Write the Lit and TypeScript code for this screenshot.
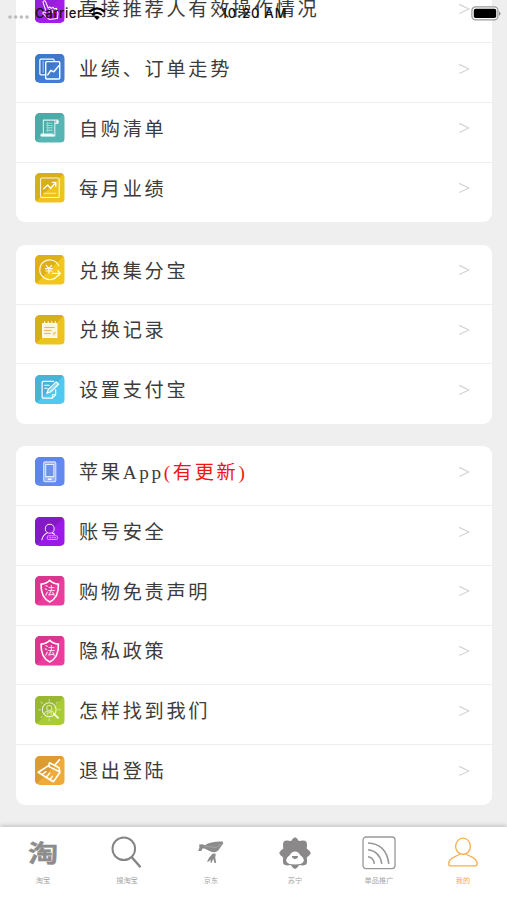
import { LitElement, html, css, svg, type TemplateResult, type SVGTemplateResult } from "lit";
import { customElement, property } from "lit/decorators.js";

const shield = svg`
  <path d="M14.5 4.2 C12 7 9 7.9 6 8 C5.7 16 7.7 22.2 14.5 25.5 C21.3 22.2 23.3 16 23 8 C20 7.9 17 7 14.5 4.2Z" stroke-width="1.6"/>
  <text x="14.5" y="18.6" font-size="11" text-anchor="middle" fill="#fff" fill-opacity=".9" stroke="none">法</text>`;

const glyphs: Record<string, SVGTemplateResult> = {
  touch: svg`<path d="M10.5 16 L8 8.5 C7.6 6.6 9.8 6 10.5 7.8 L13 14 L14.5 12.6 L16 14.2 L17.8 13 L19 14.8 L21 14 L22.6 19 L22 24 L14 25 L8 19.5 C7.3 17.5 9 17 10.5 18.5 M14 15v3 M17 16v2.5 M20 16v2"/>`,
  trend: svg`<path d="M10 20.5 H5.8 Q4.8 20.5 4.8 19.5 V6 Q4.8 5 5.8 5 H18.3 L19 7" stroke-width="1.2"/><path d="M24.3 12 V23.5 Q24.3 24.5 23.3 24.5 H11.5 Q10.5 24.5 10.5 23.5 V8.5 Q10.5 7.5 11.5 7.5 H23.3 Q24.3 7.5 24.3 8.5 V12" stroke-width="1.4"/><path d="M8 7 V18" stroke-opacity=".6"/><path d="M12.5 20.5 L15.5 16.2 L18.5 17.5 L23.5 11.5" stroke-width="1.4"/>`,
  scroll: svg`<path d="M8.2 20.5 V7 H22.5 V10.2 H19.5 M19.5 8 V22.6 H6 V20.6 H17 V22" stroke-opacity=".85"/><path d="M11 10 H17 M11 12.3 H17 M11 14.6 H17 M11 17 H17 M12.5 9v9" stroke-opacity=".5"/><path d="M6.5 21.8 H18" stroke-width="2"/><circle cx="22" cy="8.5" r="1.2" fill="#fff" stroke="none"/>`,
  chart: svg`<rect x="5.5" y="5" width="18.3" height="19" rx="1.2" stroke-opacity=".9"/><path d="M8.5 15.5 L12.5 11.8 L15.3 15 L20.2 9.4 M17 9.3 H20.4 V13" stroke-width="1.3"/><path d="M8.5 20 H20.5" stroke-opacity=".7"/>`,
  yen: svg`<path d="M22 20.5 A9.7 9.7 0 1 1 23.2 10.4" stroke-width="1.2" stroke-opacity=".9"/><path d="M17 18 H25 M22.4 15.4 L25 18 L22.4 20.6" stroke-width="1.2"/><path d="M11 10.2 L13.7 13.2 L16.5 10.2 M10.4 13.4 H17 M10.7 15.7 H16.7 M13.7 13 V18" stroke-width="1.1"/>`,
  notes: svg`<path d="M7.5 8.3 H21.5 V22 H7.5Z" fill="#fff" fill-opacity=".85"/><path d="M9.5 6.5v2 M13 6.5v2 M16.5 6.5v2 M20 6.5v2" /><path d="M9.5 12.3 H19 M9.5 15.2 H16 M9.5 18.2 H15 M18.5 19.5 V17.5 H20.5" stroke="#dfb93c" stroke-width=".9"/>`,
  edit: svg`<path d="M18.5 6.2 H8.2 Q7 6.2 7 7.4 V21.6 Q7 22.8 8.2 22.8 H17 L20.3 19.5 V14.5" stroke-width="1.2"/><path d="M17 22.8 V19.5 H20.3 M9.5 10 H14 M9.5 13 H12"/><path d="M11.6 18 L13 14.2 L20.8 6.8 L23.2 9.1 L15.6 16.5Z" fill="#fff" fill-opacity=".35" stroke-width="1.1"/>`,
  phone: svg`<rect x="8.5" y="4.8" width="12" height="19.5" rx="1.4" fill="#fff" fill-opacity=".35" stroke-opacity=".75"/><rect x="10.5" y="7.3" width="8" height="12" fill="#6e91ee" stroke-opacity=".8"/><path d="M13.3 21.9 H15.8" stroke-width="1.5"/>`,
  user: svg`<circle cx="14.5" cy="11.5" r="4.4" stroke-opacity=".85"/><path d="M6.7 22.4 C7.5 18.5 9.5 16.8 12 15.6 M17 15.7 L19.3 17"/><rect x="12" y="18.5" width="10.3" height="3.7" rx="1.8" stroke-opacity=".55"/><path d="M14.5 20.3h1 M17 20.3h1 M19.5 20.3h1" stroke-opacity=".7"/>`,
  shield,
  find: svg`<circle cx="14" cy="13.5" r="6.8" stroke-opacity=".8"/><circle cx="14" cy="11.8" r="2.5" stroke-opacity=".65"/><path d="M9.5 17.8 C10 14.5 12 14.4 14 16.3 C16 14.4 18 14.5 18.5 17.8 M12 15v3 M16 15v3" stroke-opacity=".6"/><path d="M18.5 17.5 L22.7 21.5" stroke-width="1.8" stroke-opacity=".9"/><path d="M14 3.3v1.8 M3.5 13.5h2 M22.5 13.5h2.5 M6 6l1.2 1.2 M22 6l-1.2 1.2 M14 22.3v2 M6 21l1.2-1.2" stroke-opacity=".5"/>`,
  broom: svg`<path d="M24 3.6 L20.2 8.2 M14.2 6.6 L23.7 11.6 L24.4 16.2 L18 25.3 L3.2 16 L13.8 9.2Z M13.4 10.2 L24 15.5" stroke-width="1.6"/><path d="M7 18.2 L10.8 15.4 M11.2 20.8 L14.5 16.8 M15 23 L17 20" stroke-width="1.4"/>`,
};

interface Item { icon: string; from: string; to: string; label: string; note?: string }

const groups: Item[][] = [
  [
    { icon: "touch", from: "#9420d8", to: "#a51be8", label: "直接推荐人有效操作情况" },
    { icon: "trend", from: "#3e76c9", to: "#437cd4", label: "业绩、订单走势" },
    { icon: "scroll", from: "#4caaa8", to: "#57b5b3", label: "自购清单" },
    { icon: "chart", from: "#d9ae1c", to: "#efc31f", label: "每月业绩" },
  ],
  [
    { icon: "yen", from: "#ddb018", to: "#f2c61d", label: "兑换集分宝" },
    { icon: "notes", from: "#d9ae1c", to: "#efc31f", label: "兑换记录" },
    { icon: "edit", from: "#48b3d4", to: "#50c8ef", label: "设置支付宝" },
  ],
  [
    { icon: "phone", from: "#5e86ea", to: "#6489ee", label: "苹果App", note: "(有更新)" },
    { icon: "user", from: "#8419c6", to: "#9b1ae8", label: "账号安全" },
    { icon: "shield", from: "#d93690", to: "#ec3d9e", label: "购物免责声明" },
    { icon: "shield", from: "#d93690", to: "#ec3d9e", label: "隐私政策" },
    { icon: "find", from: "#98b832", to: "#a9cc34", label: "怎样找到我们" },
    { icon: "broom", from: "#dc9c34", to: "#efab38", label: "退出登陆" },
  ],
];

@customElement("menu-row")
class MenuRow extends LitElement {
  @property({ attribute: false }) item!: Item;
  static styles = css`
    :host { display: flex; box-sizing: border-box; height: 59.75px; padding: 10.5px 21px 0 19px; align-items: flex-start; border-bottom: 1px solid #eee; }
    :host(:last-child) { border-bottom: 0; }
    .icon { width: 29.5px; height: 29.5px; flex: none; display: block; border-radius: 5px; overflow: hidden; font-family: "Noto Sans CJK SC", sans-serif; }
    .label { flex: 1; margin: 1.4px 0 0 14.5px; height: 30px; line-height: 30px; font-size: 19.2px; letter-spacing: 2.67px; white-space: nowrap; color: #3c3c3c; font-family: "Liberation Serif", "Noto Sans CJK SC", serif; }
    .note { color: #f51414; }
    .arrow { color: #d0d0d0; font: 22px/29px "Liberation Serif", serif; }
  `;
  render() {
    const i = this.item;
    return html`
      <svg class="icon" viewBox="0 0 29 29" fill="none" stroke="#fff" stroke-width="1" stroke-linejoin="round" stroke-linecap="round">
        <rect width="29" height="29" fill=${i.to} stroke="none"/>
        <path d="M0 0 H29 L0 29Z" fill=${i.from} stroke="none"/>
        ${glyphs[i.icon]}
      </svg>
      <span class="label">${i.label}${i.note ? html`<span class="note">${i.note}</span>` : ""}</span>
      <span class="arrow">&gt;</span>`;
  }
}

@customElement("status-bar")
class StatusBar extends LitElement {
  static styles = css`
    :host { display: grid; grid-template-columns: 1fr auto 1fr; align-items: center; height: 26px; padding: 0 6px 0 8px; font: 500 13px "Inter", sans-serif; color: #111; }
    .left { display: flex; align-items: center; }
    .dots { width: 22px; height: 6px; margin: 5px 5px 0 0; }
    .carrier { letter-spacing: .65px; }
    .wifi { width: 18px; height: 13px; margin-left: 5px; }
    .time { letter-spacing: .9px; }
    .battery { width: 30px; height: 15px; justify-self: end; }
  `;
  render() {
    return html`
      <div class="left">
        <svg class="dots" viewBox="0 0 22 6" fill="#bbb"><circle cx="2" cy="4" r="1.8"/><circle cx="7.7" cy="4" r="1.8"/><circle cx="13.3" cy="4" r="1.8"/><circle cx="19" cy="4" r="1.8"/></svg>
        <span class="carrier">Carrier</span>
        <svg class="wifi" viewBox="0 0 18 13" fill="none" stroke="#000" stroke-width="2.2"><path d="M1.2 4.8 Q9 -2 16.8 4.8 M4 8 Q9 3.6 14 8"/><path d="M6.2 10 Q9 7.8 11.8 10 L9 13Z" fill="#000" stroke="none"/></svg>
      </div>
      <span class="time">10:20 AM</span>
      <svg class="battery" viewBox="0 0 30 15"><rect x=".9" y=".9" width="26" height="13" rx="3.6" fill="#fff" stroke="#999" stroke-width="1.2"/><rect x="2.8" y="2.8" width="22.4" height="9.2" rx="1.8"/><path d="M28 5.2 Q31 7.5 28 9.8Z" fill="#888"/></svg>`;
  }
}

const tabs: { label: string; icon: TemplateResult; active?: boolean }[] = [
  { label: "淘宝", icon: html`<svg viewBox="0 0 34 34"><text x="0" y="0" font-size="27" font-weight="700" text-anchor="middle" fill="#8c8c8c" stroke="#8c8c8c" stroke-width=".4" stroke-linejoin="round" transform="translate(17.2 26.4) scale(1.12 .9)">淘</text></svg>` },
  { label: "搜淘宝", icon: html`<svg viewBox="0 0 34 34" fill="none" stroke="#858585" stroke-width="2"><circle cx="13.8" cy="12.8" r="11.3"/><path d="M21.6 21 L30.5 31.3" stroke-width="2.4"/></svg>` },
  { label: "京东", icon: html`<svg viewBox="0 0 34 34" fill="#8c8c8c"><path d="M5.2 8.6 L8.4 8.3 L10.8 9.3 Q17 5.2 28.6 5.6 L29.3 7.4 L27.2 10.2 L24 14.8 Q21 17.6 15.5 15 L10.5 12.6 L8.4 12.4 L7.4 14.9 L4.2 15 L5.4 11.6Z"/><path d="M18.8 17.6 L21.8 17.8 L21.2 21.6 L22.2 27 H20.6 L19.2 22.8 L17.6 26.8 H16.4 L16.8 23.8 L14.2 25.8 H13 L15.2 21.4Z"/><path d="M11 10.4 L22.5 11.4 L28 7.6" fill="none" stroke="#adadad" stroke-width=".7"/></svg>` },
  { label: "苏宁", icon: html`<svg viewBox="0 0 34 34"><path d="M17 1.2 Q19.2 1.6 20.8 5 Q26.5 3.7 28.1 5.4 Q29.5 7 28.7 12.6 Q32.3 15.3 32.8 17 Q32.3 19.4 28.8 21.4 Q29.6 27 28 28.6 Q26.5 30 21.2 29 Q19 32.6 17 33 Q15 32.6 12.8 29 Q7.5 30 6 28.6 Q4.4 27 5.2 21.4 Q1.7 19.4 1.2 17 Q1.7 15.3 5.3 12.6 Q4.5 7 5.9 5.4 Q7.5 3.7 13.2 5 Q14.8 1.6 17 1.2Z" fill="#8a8888"/><path d="M17 15.6 Q20.4 15.6 22.3 19.3 Q25.9 21.7 25.8 24.9 Q24.8 28.4 17 28.4 Q9.2 28.4 8.2 24.9 Q8.1 21.7 11.7 19.3 Q13.6 15.6 17 15.6Z" fill="#fff"/><path d="M14 20 H20 L19.6 21.9 L17 23.3 L14.4 21.9Z" fill="#8a8888"/></svg>` },
  { label: "单品推广", icon: html`<svg viewBox="0 0 34 34" fill="none" stroke="#999" stroke-width="1.3"><rect x="1" y="1" width="32" height="31.6" rx="3"/><path d="M6 7 Q24.5 8 26.8 27.8 M6 13.7 Q17.8 15 19.8 27.8 M6 20.7 Q11.7 21.5 12.3 27.8" stroke-width="1.6"/></svg>` },
  { label: "我的", active: true, icon: html`<svg viewBox="0 0 34 34" fill="none" stroke="#f9ae50" stroke-width="1.3"><ellipse cx="17" cy="10.3" rx="7.4" ry="8.1"/><path d="M14 17.7 Q12.5 19.5 8.5 20.9 Q2.7 23.2 2.7 28 Q2.7 29.9 4.8 29.9 H29 Q31.1 29.9 31.1 28 Q31.1 23.2 25.5 20.9 Q21.5 19.5 20 17.7"/></svg>` },
];

@customElement("tab-bar")
class TabBar extends LitElement {
  static styles = css`
    :host { display: flex; height: 73px; padding: 0 2px 0 1px; box-sizing: border-box; background: #fff; box-shadow: 0 -1px 5px rgba(0, 0, 0, .22); }
    .tab { flex: 1; display: flex; flex-direction: column; align-items: center; padding-top: 9px; color: #a5a5a5; font: 7.2px/10px "Noto Sans CJK SC", sans-serif; }
    .glyph { width: 34px; height: 34px; margin-bottom: 5px; }
    .active { color: #f9a83f; }
  `;
  render() {
    return tabs.map(t => html`<div class="tab ${t.active ? "active" : ""}"><div class="glyph">${t.icon}</div><span>${t.label}</span></div>`);
  }
}

@customElement("app-root")
class AppRoot extends LitElement {
  static styles = css`
    :host { display: flex; flex-direction: column; position: relative; height: 900px; overflow: hidden; background: #efefef; }
    .scroll { flex: 1; min-height: 0; display: flex; flex-direction: column; justify-content: flex-end; gap: 22.3px; padding: 0 15.5px 22.2px 16px; overflow: hidden; }
    .card { flex: none; background: #fff; border-radius: 9px; }
    .status { position: absolute; top: 0; left: 0; right: 0; }
    .tabs { position: relative; flex: none; }
  `;
  render() {
    return html`
      <main class="scroll">
        ${groups.map(g => html`<section class="card">${g.map(i => html`<menu-row .item=${i}></menu-row>`)}</section>`)}
      </main>
      <status-bar class="status"></status-bar>
      <tab-bar class="tabs"></tab-bar>`;
  }
}
